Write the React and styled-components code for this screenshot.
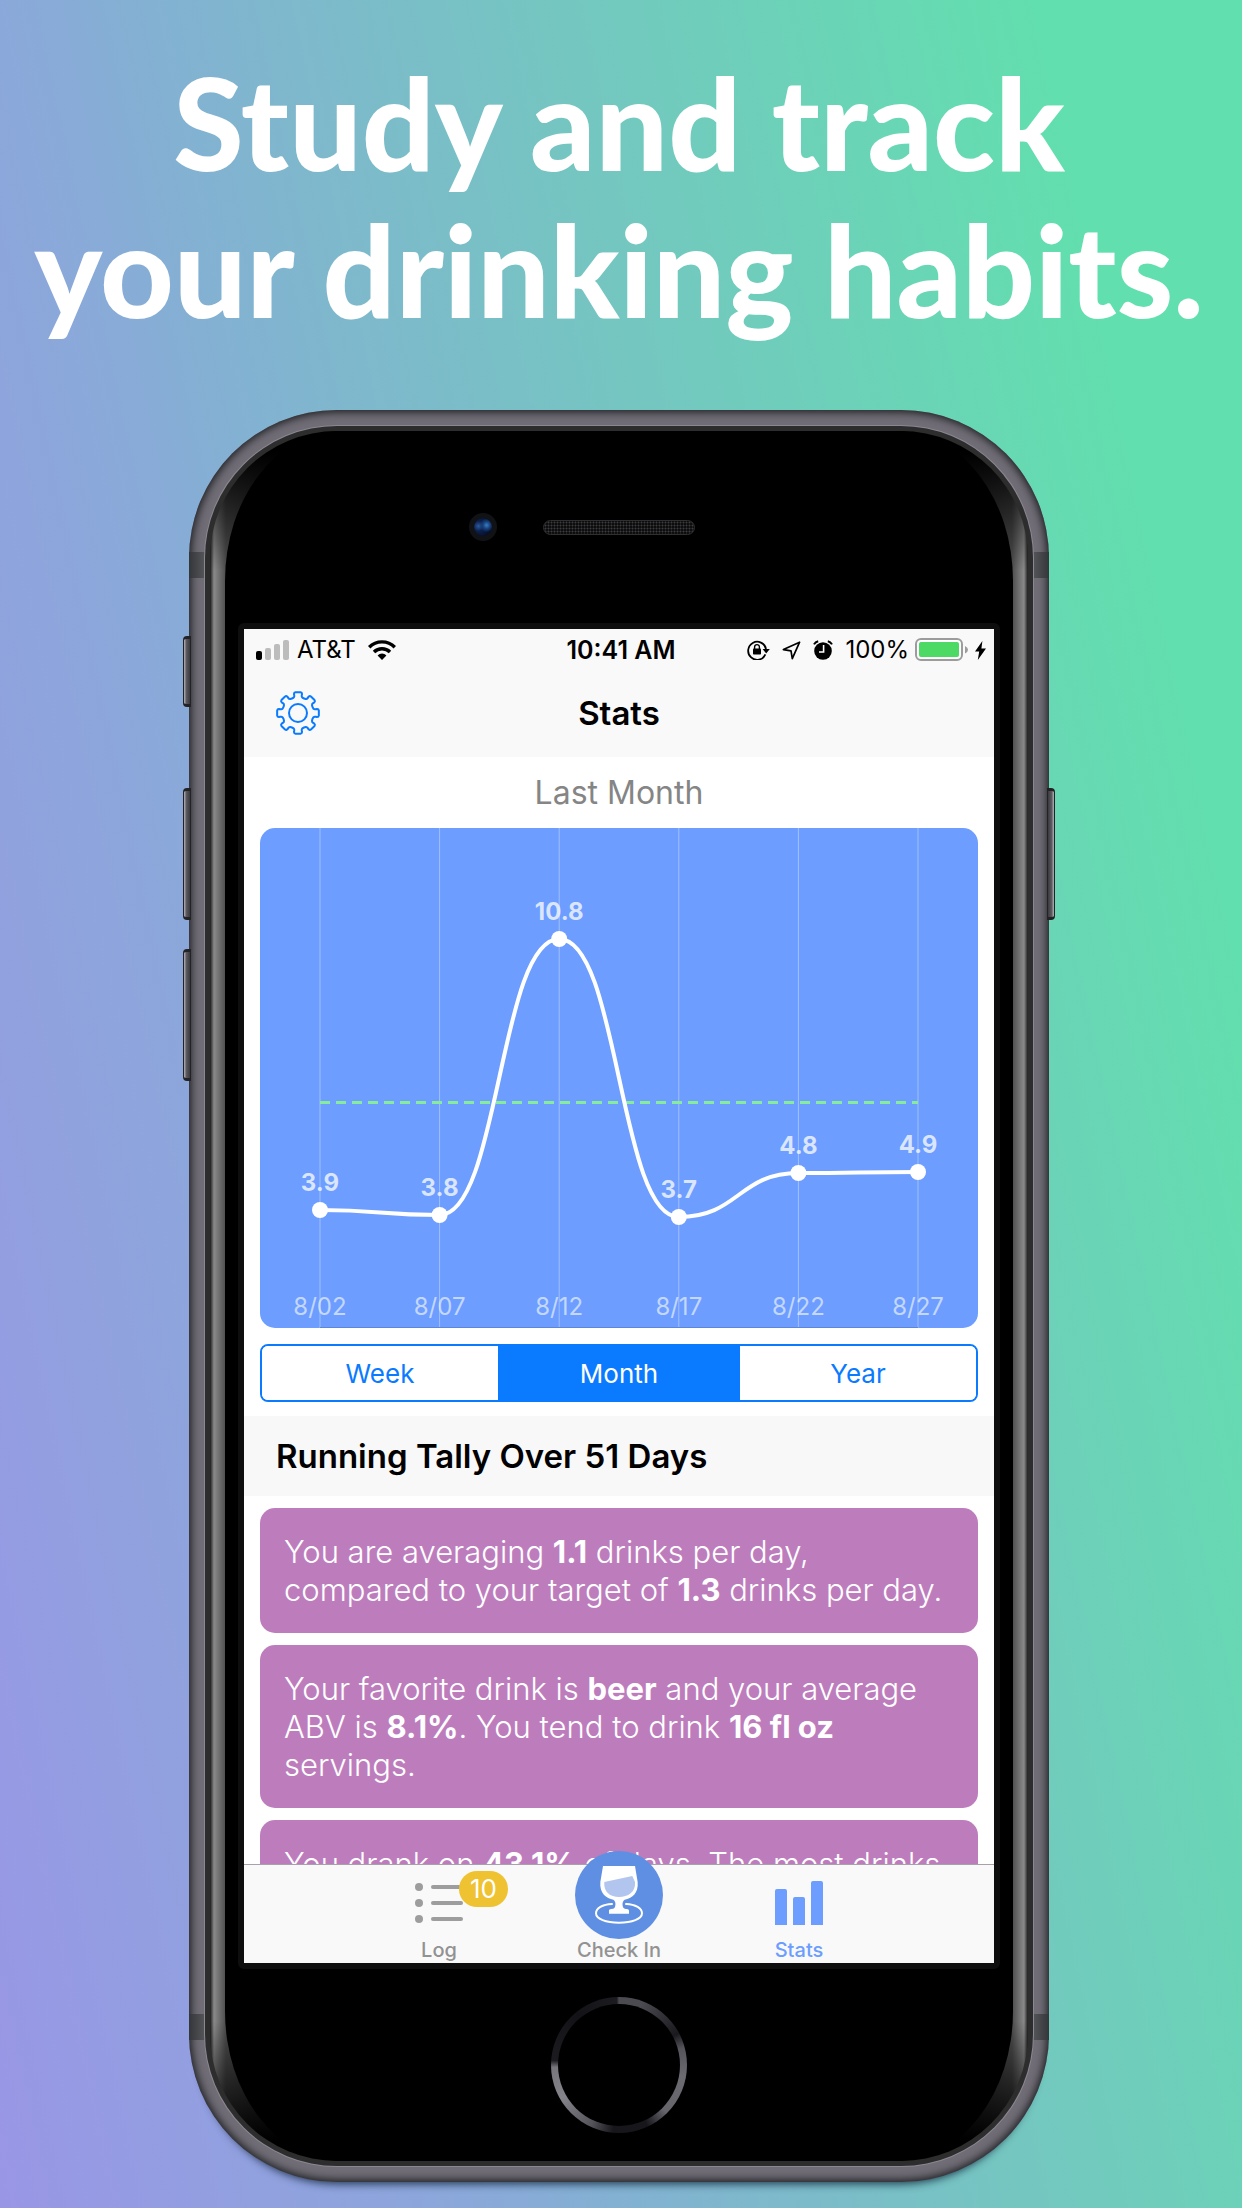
import React, { useState } from "react";
import styled, { createGlobalStyle } from "styled-components";

const GlobalStyle = createGlobalStyle`
  *, *::before, *::after { box-sizing: border-box; }
  body { margin: 0; font-family: Inter, Roboto, "Liberation Sans", sans-serif; }
  button { font: inherit; border: 0; padding: 0; background: none; cursor: pointer; }
  h1, h2, p { margin: 0; }
`;

const blue = "#0a7aff";
const tint = "#6c9dff";

const Page = styled.div`
  min-height: 100vh;
  overflow: hidden;
  background: linear-gradient(78deg, #9996e6 0%, #8ba8da 27%, #83b1d2 36%, #73c8bf 62%, #62dfae 88%);
  display: flex;
  flex-direction: column;
  align-items: center;
  gap: 68px;
  padding: 48px 4px 26px 0;
`;

const Headline = styled.h1`
  color: #fff;
  font-family: Lato, "Open Sans", sans-serif;
  font-weight: 900;
  font-size: 128px;
  line-height: 147px;
  text-align: center;
  white-space: nowrap;
`;

const Phone = styled.div`
  position: relative;
  width: 100%;
  max-width: 860px;
  padding: 16px;
  border-radius: 148px;
  background: #706d76;
  box-shadow: inset 0 0 9px 2px #1c1c20, 0 12px 8px -10px rgba(10, 30, 50, 0.8);
`;

const SideButton = styled.span`
  position: absolute;
  ${(p) => p.$side}: -6px;
  top: ${(p) => p.$top}px;
  width: 8px;
  height: ${(p) => p.$height}px;
  border-radius: ${(p) => (p.$side === "left" ? "4px 0 0 4px" : "0 4px 4px 0")};
  border: 1px solid #232326;
  border-width: 3px 1px;
  background: linear-gradient(${(p) => (p.$side === "left" ? "90deg" : "270deg")}, #b5b3b8, #5c5a61 40%, #3a393e);
`;

const Antenna = styled.span`
  position: absolute;
  ${(p) => p.$side}: 0;
  ${(p) => p.$edge}: 142px;
  width: 16px;
  height: 26px;
  background: linear-gradient(${(p) => (p.$side === "left" ? "90deg" : "270deg")}, #35363a, #54565a);
`;

const Rim = styled.div`
  position: relative;
  padding: 5px;
  border-radius: 132px;
  background: #2d2d2e;
  box-shadow: 0 0 0 1px #8b8891;
`;

const Glass = styled.div`
  padding: 0 15px;
  border-radius: 127px;
  overflow: hidden;
  background:
    linear-gradient(#000 20px, transparent 140px, transparent calc(100% - 140px), #000 calc(100% - 20px)),
    linear-gradient(90deg, #1c1c1c, #8a8a8a 4px, #4c4c4c 16px, #303030 60px, #000 100px, #000 calc(100% - 100px), #303030 calc(100% - 60px), #4c4c4c calc(100% - 16px), #8a8a8a calc(100% - 4px), #1c1c1c);
`;

const Face = styled.div`
  background: #000;
  border-radius: 116px / 150px;
  display: flex;
  flex-direction: column;
  align-items: center;
`;

const TopBezel = styled.div`
  width: 100%;
  height: 192px;
  display: grid;
  grid-template-columns: 1fr 152px 1fr;
  align-items: center;
`;

const Camera = styled.span`
  justify-self: end;
  width: 28px;
  height: 28px;
  margin-right: 46px;
  border-radius: 50%;
  border: 5px solid #111215;
  background: radial-gradient(circle at 70% 40%, #3c7cc0 0, #16407c 22%, transparent 42%),
    radial-gradient(circle at 25% 45%, #2c5c9c 0, #0c1f4c 30%, #071028 70%);
`;

const Speaker = styled.span`
  height: 15px;
  border-radius: 8px;
  border: 1px solid #303033;
  background: radial-gradient(#3c3c3e 30%, #0d0d0e 60%) 0 0 / 3px 3px;
`;

const Screen = styled.div`
  width: calc(100% - 26px);
  border: 6px solid #0e0e0e;
  border-radius: 6px;
  background: #0e0e0e;
`;

const Viewport = styled.div`
  aspect-ratio: 750 / 1334;
  width: 100%;
  overflow: hidden;
  background: #fff;
  display: flex;
  flex-direction: column;
`;

const BottomBezel = styled.div`
  height: 192px;
  padding-top: 28px;
`;

const HomeButton = styled.button`
  display: block;
  width: 136px;
  height: 136px;
  border-radius: 50%;
  padding: 7px;
  background: conic-gradient(#4c4b51 0deg, #4c4b51 20deg, #1a191e 62deg, #55545a 75deg, #6c6b72 100deg, #66656c 135deg, #17161b 155deg, #17161b 185deg, #55545a 205deg, #85848b 240deg, #77767c 268deg, #1c1b20 274deg, #131217 320deg, #1c1b20 358deg, #4c4b51 360deg);
  &::after {
    content: "";
    display: block;
    height: 100%;
    border-radius: 50%;
    background: #000;
  }
`;

const StatusBar = styled.div`
  flex: none;
  height: 40px;
  padding: 2px 8px 0 12px;
  background: #f9f9f9;
  display: grid;
  grid-template-columns: 1fr auto 1fr;
  align-items: center;
  font-size: 24px;
  line-height: 28px;
  color: #000;
`;

const StatusGroup = styled.div`
  display: flex;
  align-items: center;
  justify-content: ${(p) => (p.$end ? "flex-end" : "flex-start")};
  gap: ${(p) => p.$gap}px;
  svg { display: block; flex: none; }
`;

const Time = styled.time`
  font-size: 25px;
  font-weight: 600;
`;

const NavBar = styled.header`
  flex: none;
  height: 88px;
  padding: 0 32px;
  background: #f9f9f9;
  display: grid;
  grid-template-columns: 1fr auto 1fr;
  align-items: center;
`;

const NavTitle = styled.h1`
  font-size: 33px;
  line-height: 40px;
  font-weight: 600;
`;

const IconButton = styled.button`
  width: 44px;
  height: 44px;
  color: ${blue};
  svg { display: block; }
`;

const Content = styled.main`
  flex: 1;
  min-height: 0;
  overflow: hidden;
`;

const ChartSection = styled.section`
  padding: 0 16px 14px;
  display: flex;
  flex-direction: column;
`;

const Period = styled.h2`
  font-weight: 400;
  font-size: 32px;
  line-height: 71px;
  color: #858585;
  text-align: center;
`;

const ChartCard = styled.div`
  border-radius: 15px;
  overflow: hidden;
  background: ${tint};
  margin-bottom: 16px;
  svg { display: block; width: 100%; height: auto; }
`;

const ValueLabel = styled.text`
  font-size: 24px;
  font-weight: 700;
  fill: rgba(255, 255, 255, 0.75);
  text-anchor: middle;
`;

const DateLabel = styled.text`
  font-size: 24px;
  font-weight: 400;
  fill: rgba(255, 255, 255, 0.6);
  text-anchor: middle;
`;

const Segmented = styled.div`
  display: grid;
  grid-template-columns: 118fr 121fr 118fr;
  height: 58px;
  border: 2px solid ${blue};
  border-radius: 8px;
  overflow: hidden;
`;

const Segment = styled.button`
  font-size: 26px;
  color: ${(p) => (p.$on ? "#fff" : blue)};
  background: ${(p) => (p.$on ? blue : "#fff")};
`;

const TallyHeader = styled.h2`
  padding: 0 32px;
  background: #f8f8f8;
  font-size: 33px;
  line-height: 80px;
  font-weight: 600;
`;

const Cards = styled.div`
  padding: 12px 16px;
  display: flex;
  flex-direction: column;
  gap: 12px;
`;

const Card = styled.p`
  padding: 25px 20px 24px 24px;
  border-radius: 15px;
  background: #bd7dbd;
  color: #fff;
  font-size: 31px;
  line-height: 38px;
  font-weight: 350;
  b { font-weight: 700; }
`;

const TabBar = styled.nav`
  position: relative;
  flex: none;
  height: 99px;
  background: #f9f9f9;
  border-top: 1px solid #a9a0ab;
  display: flex;
  justify-content: center;
`;

const Tab = styled.button`
  position: relative;
  width: 180px;
  height: 98px;
  padding-bottom: 1px;
  display: flex;
  flex-direction: column;
  align-items: center;
  justify-content: flex-end;
  font-size: 20px;
  line-height: 24px;
  font-weight: 500;
  color: ${(p) => (p.$on ? tint : "#929292")};
  svg { display: block; flex: none; }
`;

const TabIcon = styled.span`
  height: 48px;
  margin-bottom: 13px;
`;

const CheckInIcon = styled.span`
  width: 88px;
  height: 88px;
  margin-bottom: -1px;
  border-radius: 50%;
  background: #5f8fe3;
`;

const Badge = styled.span`
  position: absolute;
  left: 110px;
  top: 6px;
  width: 49px;
  height: 36px;
  border-radius: 18px;
  background: #efc231;
  color: #fff;
  font-size: 26px;
  line-height: 36px;
  font-weight: 400;
`;

const points = [
  { date: "8/02", value: "3.9", y: 382 },
  { date: "8/07", value: "3.8", y: 387 },
  { date: "8/12", value: "10.8", y: 111 },
  { date: "8/17", value: "3.7", y: 389 },
  { date: "8/22", value: "4.8", y: 345 },
  { date: "8/27", value: "4.9", y: 344 },
].map((p, i) => ({ ...p, x: 60 + i * 119.6 }));

function linePath() {
  return points.reduce((d, p, i) => {
    if (i === 0) return `M${p.x} ${p.y}`;
    const prev = points[i - 1];
    const mid = (prev.x + p.x) / 2;
    return `${d} C${mid} ${prev.y} ${mid} ${p.y} ${p.x} ${p.y}`;
  }, "");
}

function Chart() {
  return (
    <svg viewBox="0 0 718 500" role="img" aria-label="Drinks during the last month">
      {points.map((p) => (
        <line key={p.date} x1={p.x} x2={p.x} y1="0" y2="500" stroke="#fff" strokeOpacity="0.36" strokeWidth="1" />
      ))}
      <line x1="60" x2="658" y1="499.5" y2="499.5" stroke="#5d86d6" />
      <line x1="60" x2="658" y1="274.5" y2="274.5" stroke="#86ec9b" strokeWidth="3" strokeDasharray="10 6" />
      <path d={linePath()} fill="none" stroke="#fff" strokeWidth="4" />
      {points.map((p) => (
        <g key={p.date}>
          <circle cx={p.x} cy={p.y} r="8" fill="#fff" />
          <ValueLabel x={p.x} y={p.y - 19}>{p.value}</ValueLabel>
          <DateLabel x={p.x} y="487">{p.date}</DateLabel>
        </g>
      ))}
    </svg>
  );
}

function gearPath() {
  const cx = 22;
  const cy = 22;
  const at = (r, deg) => {
    const a = (deg * Math.PI) / 180;
    return `${(cx + r * Math.sin(a)).toFixed(2)} ${(cy - r * Math.cos(a)).toFixed(2)}`;
  };
  let d = "";
  for (let i = 0; i < 8; i++) {
    const c = i * 45;
    d += `${i ? "L" : "M"}${at(16, c - 16)} Q${at(16.5, c - 12)} ${at(18, c - 12)} L${at(19.5, c - 12)} Q${at(21, c - 11)} ${at(21, c - 7)} L${at(21, c + 7)} Q${at(21, c + 11)} ${at(19.5, c + 12)} L${at(18, c + 12)} Q${at(16.5, c + 12)} ${at(16, c + 16)} Q${at(15.4, c + 22.5)} ${at(16, c + 29)} `;
  }
  return d + "Z";
}

const GearIcon = () => (
  <svg width="44" height="44" viewBox="0 0 44 44" fill="none" stroke="currentColor" strokeWidth="2" strokeLinejoin="round">
    <path d={gearPath()} />
    <circle cx="22" cy="22" r="9" />
  </svg>
);

const SignalIcon = () => (
  <svg width="33" height="20" viewBox="0 0 33 20">
    <rect x="0" y="11" width="6" height="9" rx="2" fill="#000" />
    <rect x="9" y="8" width="6" height="12" rx="2" fill="#bcbcbd" />
    <rect x="18" y="4" width="6" height="16" rx="2" fill="#bcbcbd" />
    <rect x="27" y="0" width="6" height="20" rx="2" fill="#bcbcbd" />
  </svg>
);

const WifiIcon = () => (
  <svg width="32" height="20" viewBox="-4 0 32 20" fill="none" stroke="#000" strokeWidth="3.4">
    <path d="M1.2 7.2a18 18 0 0 1 25.6 0" />
    <path d="M6 12a11.4 11.4 0 0 1 16 0" />
    <path d="M14 20l-4.4-4.6a6.2 6.2 0 0 1 8.8 0z" fill="#000" stroke="none" />
  </svg>
);

const LockIcon = () => (
  <svg width="23" height="20" viewBox="0 0 23 20">
    <path d="M18.4 14.4A9 9 0 1 1 19 9" fill="none" stroke="#000" strokeWidth="1.8" />
    <path d="M15.6 9h7.2l-3.6 4.6z" />
    <rect x="6" y="8.6" width="8" height="6" rx="0.8" />
    <path d="M7.6 9V7a2.4 2.4 0 0 1 4.8 0v2" fill="none" stroke="#000" strokeWidth="1.4" />
  </svg>
);

const LocationIcon = () => (
  <svg width="19" height="19" viewBox="0 0 19 19" fill="none" stroke="#000" strokeWidth="1.7" strokeLinejoin="round">
    <path d="M17.6 1.2L1.4 8.6l7.6 1.3 1.3 7.8z" />
  </svg>
);

const AlarmIcon = () => (
  <svg width="20" height="20" viewBox="0 0 20 20">
    <circle cx="10" cy="11" r="8.8" />
    <path d="M1 4.4Q2.4 1.8 5.2 1.2M19 4.4Q17.6 1.8 14.8 1.2" fill="none" stroke="#000" strokeWidth="2" />
    <path d="M10.6 5v7H6" fill="none" stroke="#fff" strokeWidth="1.6" />
  </svg>
);

const BatteryIcon = () => (
  <svg width="54" height="24" viewBox="0 0 54 24">
    <rect x="1" y="1" width="46" height="21" rx="5" fill="#fff" stroke="#9c9c9c" strokeWidth="2" />
    <rect x="4" y="4" width="40" height="15" rx="2" fill="#4cd964" />
    <path d="M50 8q3 1.400 3 3.800t-3 3.800z" fill="#9c9c9c" />
  </svg>
);

const BoltIcon = () => (
  <svg width="11" height="19" viewBox="0 0 11 19">
    <path d="M7.400 0L0 10.600h4.200L2.800 19 11 7.600H6.400z" />
  </svg>
);

const LogIcon = () => (
  <svg width="48" height="48" viewBox="0 0 48 48" fill="#9d9d9d">
    {[10, 26, 42].map((y) => (
      <g key={y}>
        <circle cx="4" cy={y} r="4" />
        <rect x="16" y={y - 2} width="32" height="4" rx="2" />
      </g>
    ))}
  </svg>
);

const StatsIcon = () => (
  <svg width="48" height="48" viewBox="0 0 48 48" fill={tint}>
    <path d="M0 48V14q0-2 2-2h8q2 0 2 2v34zM18 48V22q0-2 2-2h8q2 0 2 2v26zM36 48V6q0-2 2-2h8q2 0 2 2v42z" />
  </svg>
);

const GlassIcon = () => (
  <svg width="88" height="88" viewBox="0 0 264 264">
    <path d="M111 159C82 160 63 172 63 187c0 17 30 28 69 28s69-11 69-28c0-15-19-27-48-28" fill="none" stroke="#fff" strokeWidth="6" strokeLinecap="round" />
    <path d="M84 45h96l8 48c3 34-18 50-39 53-8 5-8 18-3 25 4 4 16 2 16 8v9h-60v-9c0-6 12-4 16-8 5-7 5-20-3-25-21-3-42-19-39-53z" fill="#fff" />
    <path d="M88 93l84-18 8 18c3 30-22 45-48 45s-47-15-44-45z" fill="#b1c5ee" />
  </svg>
);

export default function App() {
  const [period, setPeriod] = useState("Month");
  return (
    <Page>
      <GlobalStyle />
      <Headline>
        Study and track
        <br />
        your drinking habits.
      </Headline>
      <Phone>
        <SideButton $side="left" $top={226} $height={71} />
        <SideButton $side="left" $top={378} $height={132} />
        <SideButton $side="left" $top={539} $height={132} />
        <SideButton $side="right" $top={378} $height={132} />
        <Antenna $side="left" $edge="top" />
        <Antenna $side="right" $edge="top" />
        <Antenna $side="left" $edge="bottom" />
        <Antenna $side="right" $edge="bottom" />
        <Rim>
          <Glass>
            <Face>
              <TopBezel>
                <Camera />
                <Speaker />
              </TopBezel>
              <Screen>
                <Viewport>
                  <StatusBar>
                    <StatusGroup $gap={8}>
                      <SignalIcon />
                      <span>AT&amp;T</span>
                      <WifiIcon />
                    </StatusGroup>
                    <Time>10:41 AM</Time>
                    <StatusGroup $end $gap={12}>
                      <LockIcon />
                      <LocationIcon />
                      <AlarmIcon />
                      <StatusGroup $gap={6}>
                        <span>100%</span>
                        <BatteryIcon />
                        <BoltIcon />
                      </StatusGroup>
                    </StatusGroup>
                  </StatusBar>
                  <NavBar>
                    <IconButton aria-label="Settings">
                      <GearIcon />
                    </IconButton>
                    <NavTitle>Stats</NavTitle>
                  </NavBar>
                  <Content>
                    <ChartSection>
                      <Period>Last Month</Period>
                      <ChartCard>
                        <Chart />
                      </ChartCard>
                      <Segmented>
                        {["Week", "Month", "Year"].map((name) => (
                          <Segment key={name} $on={name === period} aria-pressed={name === period} onClick={() => setPeriod(name)}>
                            {name}
                          </Segment>
                        ))}
                      </Segmented>
                    </ChartSection>
                    <TallyHeader>Running Tally Over 51 Days</TallyHeader>
                    <Cards>
                      <Card>
                        You are averaging <b>1.1</b> drinks per day, compared to your target of <b>1.3</b> drinks per day.
                      </Card>
                      <Card>
                        Your favorite drink is <b>beer</b> and your average ABV is <b>8.1%</b>. You tend to drink <b>16 fl oz</b> servings.
                      </Card>
                      <Card>
                        You drank on <b>43.1%</b> of days. The most drinks
                      </Card>
                    </Cards>
                  </Content>
                  <TabBar>
                    <Tab>
                      <TabIcon>
                        <LogIcon />
                      </TabIcon>
                      <Badge>10</Badge>
                      Log
                    </Tab>
                    <Tab>
                      <CheckInIcon>
                        <GlassIcon />
                      </CheckInIcon>
                      Check In
                    </Tab>
                    <Tab $on>
                      <TabIcon>
                        <StatsIcon />
                      </TabIcon>
                      Stats
                    </Tab>
                  </TabBar>
                </Viewport>
              </Screen>
              <BottomBezel>
                <HomeButton aria-label="Home" />
              </BottomBezel>
            </Face>
          </Glass>
        </Rim>
      </Phone>
    </Page>
  );
}
